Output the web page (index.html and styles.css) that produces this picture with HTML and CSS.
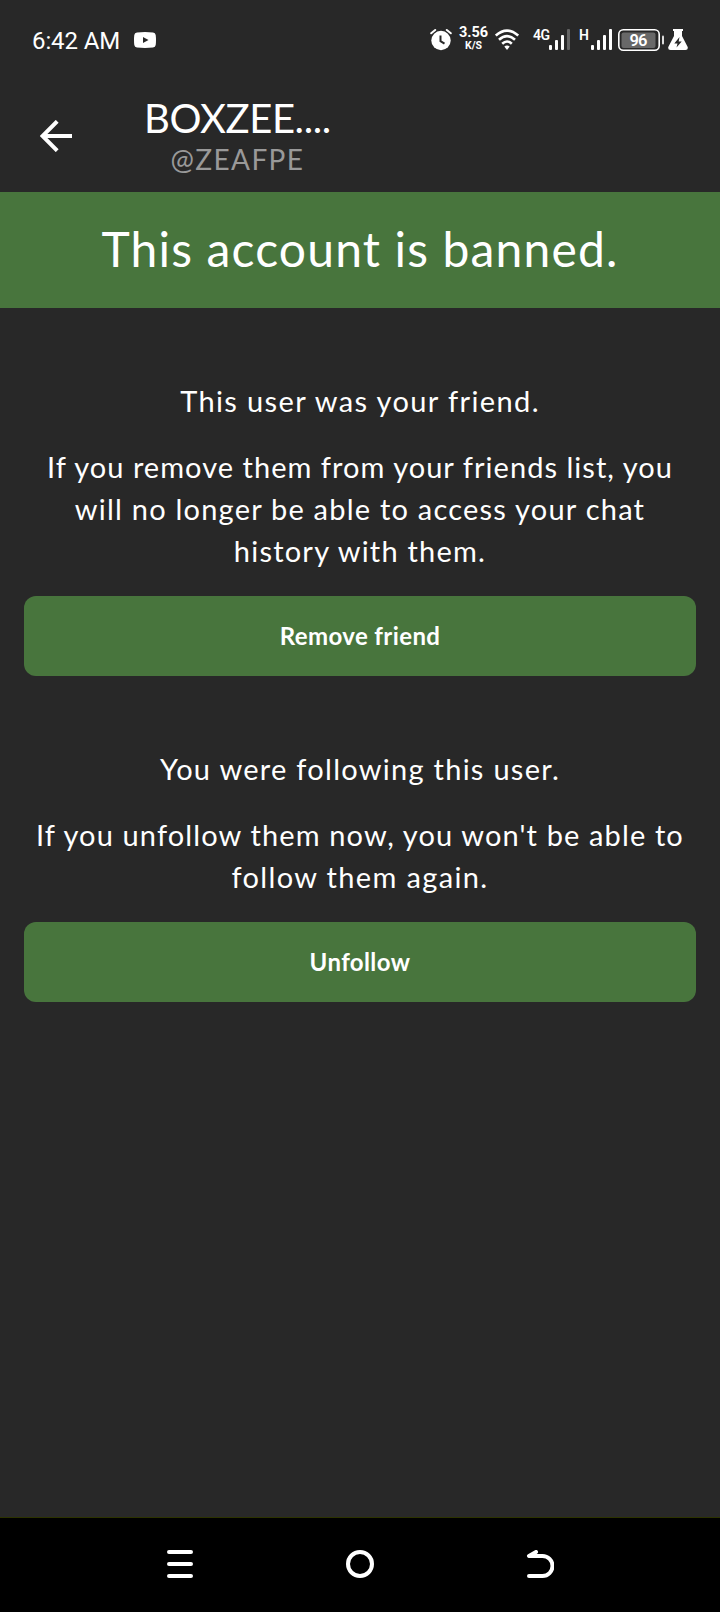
FILE: index.html
```html
<!DOCTYPE html>
<html lang="en">
<head>
    <meta charset="UTF-8">
    <title>BOXZEE....</title>
    <link rel="stylesheet" href="styles.css">
</head>
<body>
    <div class="status">
        <span class="time">6:42 AM</span>
        <svg class="youtube" width="22" height="16" viewBox="0 0 22 16">
            <path fill="#fff" d="M3 .4Q11-.4 19 .4 21.400.6 21.700 3 22.300 8 21.700 13 21.400 15.400 19 15.600 11 16.400 3 15.600.6 15.400.3 13-.3 8 .3 3 .6.6 3 .4z"/>
            <path fill="#282828" d="M9 5v6l5.500-3z"/>
        </svg>

        <div class="status-icons">
            <svg class="alarm" width="22" height="26" viewBox="0 0 22 26">
                <circle cx="11" cy="14.500" r="9.700" fill="#fff"/>
                <path d="M1.200 7.300 5.200 4M20.800 7.300 16.800 4" stroke="#fff" stroke-width="2" stroke-linecap="round"/>
                <path d="M10.500 9.500v5.700l4 2.400" fill="none" stroke="#282828" stroke-width="2"/>
            </svg>
            <div class="speed">
                <span class="speed-value">3.56</span>
                <span class="speed-unit">K/S</span>
            </div>
            <svg class="wifi" width="24" height="26" viewBox="0 0 24 26">
                <g fill="none" stroke="#fff" stroke-width="2.600">
                    <path d="M.8 9.600Q12-.4 23.200 9.600"/>
                    <path d="M4 13.800q8-7.400 16 0"/>
                    <path d="M7.200 17.800q4.800-4.600 9.600 0"/>
                </g>
                <path d="M9.300 20.500q2.700-2 5.400 0L12 24z" fill="#fff"/>
            </svg>
            <svg class="signal-4g" width="39" height="26" viewBox="0 0 39 26">
                <text x="1" y="14" font-size="14" textLength="17">4G</text>
                <g fill="#fff">
                    <rect x="17" y="19" width="3" height="5" rx="1"/>
                    <rect x="23" y="14" width="3" height="10" rx="1"/>
                    <rect x="29" y="9" width="3" height="15" rx="1"/>
                    <rect x="35" y="3" width="3" height="21" rx="1" fill="#646464"/>
                </g>
            </svg>
            <svg class="signal-h" width="34" height="26" viewBox="0 0 34 26">
                <text x="0" y="14" font-size="14">H</text>
                <g fill="#fff">
                    <rect x="12" y="19" width="3" height="5" rx="1"/>
                    <rect x="18" y="14" width="3" height="10" rx="1"/>
                    <rect x="24" y="9" width="3" height="15" rx="1"/>
                    <rect x="30" y="3" width="3" height="21" rx="1"/>
                </g>
            </svg>
            <svg class="battery" width="48" height="26" viewBox="0 0 48 26">
                <rect x="1.800" y="3.800" width="40.400" height="20.400" rx="4.500" fill="none" stroke="#fff" stroke-width="1.600"/>
                <rect x="4.500" y="6.500" width="34" height="15.500" rx="2" fill="#686868"/>
                <rect x="45" y="9.500" width="2" height="9" rx="1" fill="#ddd"/>
                <text x="12.500" y="19.500" font-size="16.500" textLength="18">96</text>
            </svg>
            <svg class="flask" width="20" height="26" viewBox="0 0 20 26">
                <path fill="#fff" d="M5 3h10v2h-1v5l5.700 11q.6 3-2.200 3h-15Q-.3 24 .3 21L6 10V5H5z"/>
                <path fill="#282828" d="M11.500 11 6.300 17.500H9.500L8.500 21.500 13.700 15.500H10.700z"/>
            </svg>
        </div>
    </div>

    <div class="header">
        <svg class="back" width="32" height="32" viewBox="0 0 32 32">
            <path d="M32 16H3M17.200 1.300 2.500 16l14.700 14.700" fill="none" stroke="#fff" stroke-width="4"/>
        </svg>
        <div class="user">
            <h1 class="name">BOXZEE....</h1>
            <span class="handle">@ZEAFPE</span>
        </div>
    </div>

    <div class="banner">This account is banned.</div>

    <div class="content">
        <div class="section">
            <p class="friend-title">This user was your friend.</p>
            <p class="friend-text">If you remove them from your friends list, you<br><span>will no longer be able to access your chat<br>history with them.</span></p>
            <button>Remove friend</button>
        </div>
        <div class="section">
            <p class="follow-title">You were following this user.</p>
            <p class="follow-text">If you unfollow them now, you won't be able to<br><span>follow them again.</span></p>
            <button>Unfollow</button>
        </div>
    </div>

    <div class="nav">
        <svg width="28" height="28" viewBox="0 0 28 28">
            <path d="M3 2h22M3 14h22M3 26h22" stroke="#fff" stroke-width="4" stroke-linecap="round"/>
        </svg>
        <svg width="28" height="28" viewBox="0 0 28 28">
            <circle cx="14" cy="14" r="12" fill="none" stroke="#fff" stroke-width="4"/>
        </svg>
        <svg width="28" height="28" viewBox="0 0 28 28">
            <path d="M10 2 3 6H16.500a10 10 0 0 1 0 20H3" fill="none" stroke="#fff" stroke-width="4" stroke-linecap="round" stroke-linejoin="round"/>
        </svg>
    </div>
</body>
</html>
```

FILE: styles.css
```css
*{
    box-sizing: border-box;
    margin: 0;
    padding: 0;
}

body {
    background-color: #282828;
    color: white;
    font-family: Lato, sans-serif;
    min-height: 1612px;
    display: flex;
    flex-direction: column;
}

svg{
    display: block;
    flex-shrink: 0;
}

.status {
    height: 82px;
    padding: 0 32px;
    display: flex;
    align-items: center;
    font-family: Roboto, sans-serif;
}

.time {
    font-size: 24px;
    letter-spacing: -0.1px;
    white-space: nowrap;
}

.youtube {
    margin-left: 14px;
    margin-top: -2px;
}

.status-icons {
    display: flex;
    margin-left: auto;
    margin-top: -4px;
}

.status-icons text {
    fill: white;
    font-weight: 600;
}

.speed {
    width: 29px;
    margin-left: 7px;
    display: flex;
    flex-direction: column;
    align-items: center;
    font-weight: 700;
    white-space: nowrap;
}

.speed-value {
    font-size: 14.5px;
    line-height: 14px;
}

.speed-unit {
    font-size: 10.5px;
    line-height: 11px;
}

.wifi{
    margin-left: 7px;
}

.signal-4g {
    margin-left: 13px;
}

.signal-h {
    margin-left: 8px;
}

.battery {
    margin-left: 4px;
}

.flask {
    margin-left: 3px;
}

.header {
    height: 110px;
    padding: 12px 40px 0;
    display: flex;
}

.back {
    margin-top: 26px;
}

.user {
    margin-left: 72px;
    text-align: center;
}

.name {
    font-size: 40px;
    font-weight: 400;
    line-height: 48px;
    letter-spacing: -0.4px;
}

.handle {
    display: block;
    font-size: 28px;
    line-height: 34px;
    letter-spacing: 1.4px;
    color: #999;
}

.banner {
    height: 116px;
    padding-bottom: 3px;
    display: flex;
    align-items: center;
    justify-content: center;
    background: #48753d;
    font-size: 48px;
    letter-spacing: 1.15px;
}

.content {
    flex: 1;
    padding: 0 24px;
    text-align: center;
    font-size: 29px;
    line-height: 42px;
}

.section {
    padding-top: 72px;
}

.section p {
    margin-bottom: 24px;
    white-space: nowrap;
}

.friend-title {
    letter-spacing: 1.38px;
}

.friend-text {
    letter-spacing: 1.03px;
}

.friend-text span {
    letter-spacing: 1.22px;
}

.follow-title {
    letter-spacing: 1.27px;
}

.follow-text {
    letter-spacing: 1.13px;
}

.follow-text span {
    letter-spacing: 1.35px;
}

button{
    display: block;
    width: 100%;
    height: 80px;
    padding-bottom: 2px;
    border: none;
    border-radius: 12px;
    color: white;
    background: #48753d;
    font: 700 24px Lato, sans-serif;
    letter-spacing: 0.4px;
    cursor: pointer;
}

.nav {
    height: 95px;
    padding: 32px 166px 0;
    display: flex;
    justify-content: space-between;
    background: black;
    border-top: 1px solid #2c3300;
}
```
